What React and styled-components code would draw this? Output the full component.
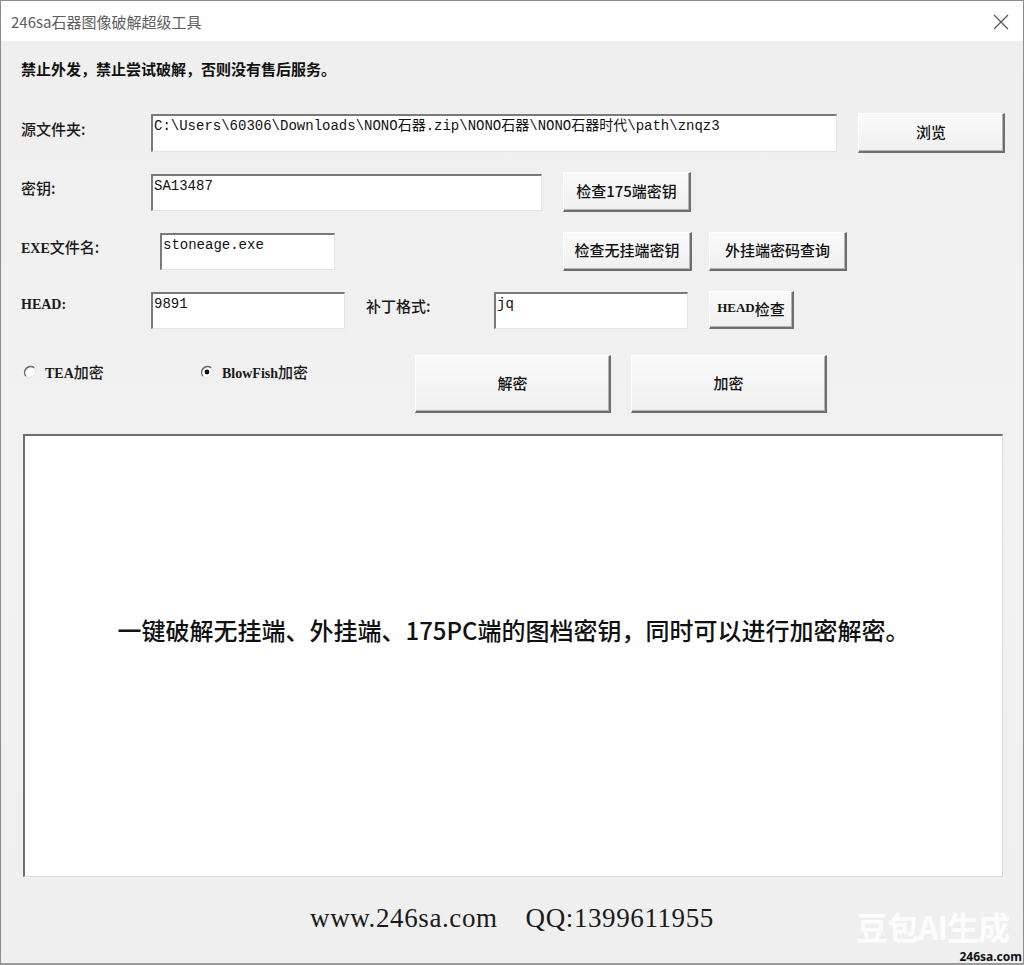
import React from "react";
import styled, { createGlobalStyle } from "styled-components";

const GlobalStyle = createGlobalStyle`
  html, body {
    margin: 0;
    padding: 0;
    background: #ffffff;
  }
  * {
    box-sizing: border-box;
  }
`;

const CJK = `"Noto Sans CJK SC", "Noto Sans", sans-serif`;
const MONO = `"Liberation Mono", "Noto Sans CJK SC", monospace`;
const SERIF = `"Liberation Serif", "Noto Sans CJK SC", serif`;

function CloseIcon() {
  return (
    <svg width="16" height="16" viewBox="0 0 16 16">
      <path d="M1 1 L15 15 M15 1 L1 15" stroke="#555" strokeWidth="1.2" fill="none" />
    </svg>
  );
}

function Radio({ checked }) {
  return (
    <svg width="14" height="14" viewBox="0 0 14 14">
      <circle cx="7" cy="7" r="6" fill="#fff" />
      <path d="M2.8 11.2 A6 6 0 0 1 11.2 2.8" stroke="#6a6a6a" strokeWidth="1.5" fill="none" />
      <path d="M11.2 2.8 A6 6 0 0 1 2.8 11.2" stroke="#e2e2e2" strokeWidth="1.2" fill="none" />
      {checked && <circle cx="7" cy="7" r="2.4" fill="#111" />}
    </svg>
  );
}

export default function App() {
  return (
    <>
      <GlobalStyle />
      <Window>
        <TitleBar>
          <Title>246sa石器图像破解超级工具</Title>
          <Close>
            <CloseIcon />
          </Close>
        </TitleBar>

        <Body>
          <Notice>禁止外发，禁止尝试破解，否则没有售后服务。</Notice>

          <Row top={34} h={40}>
            <Label w={130}>源文件夹:</Label>
            <Field w={686} h={38}>
              C:\Users\60306\Downloads\NONO石器.zip\NONO石器\NONO石器时代\path\znqz3
            </Field>
            <Button w={147} h={40} gap={21}>
              浏览
            </Button>
          </Row>

          <Row top={19} h={40}>
            <Label w={130}>密钥:</Label>
            <Field w={391} h={37}>SA13487</Field>
            <Button w={128} h={40} gap={21}>
              检查175端密钥
            </Button>
          </Row>

          <Row top={20} h={39}>
            <Label w={139} latin>
              EXE<Cjk>文件名:</Cjk>
            </Label>
            <Field w={175} h={37}>stoneage.exe</Field>
            <Button w={129} h={39} gap={228}>
              检查无挂端密钥
            </Button>
            <Button w={138} h={39} gap={17}>
              外挂端密码查询
            </Button>
          </Row>

          <Row top={20} h={38}>
            <Label w={130} latin>
              HEAD:
            </Label>
            <Field w={194} h={37}>9891</Field>
            <Label w={128} gap={21}>
              补丁格式:
            </Label>
            <Field w={194} h={37}>jq</Field>
            <Button w={85} h={38} gap={21} latin>
              HEAD<Cjk>检查</Cjk>
            </Button>
          </Row>

          <OptionRow>
            <RadioGroup>
              <RadioItem w={177}>
                <Radio />
                <RadioText>
                  TEA<Cjk>加密</Cjk>
                </RadioText>
              </RadioItem>
              <RadioItem w={215}>
                <Radio checked />
                <RadioText>
                  BlowFish<Cjk>加密</Cjk>
                </RadioText>
              </RadioItem>
            </RadioGroup>
            <Button w={196} h={58} big>
              解密
            </Button>
            <Button w={196} h={58} gap={20} big>
              加密
            </Button>
          </OptionRow>

          <Output>一键破解无挂端、外挂端、175PC端的图档密钥，同时可以进行加密解密。</Output>

          <Footer>
            <span>www.246sa.com</span>
            <span>QQ:1399611955</span>
          </Footer>
        </Body>

        <Watermark>豆包AI生成</Watermark>
        <SiteMark>246sa.com</SiteMark>
      </Window>
    </>
  );
}

const Window = styled.div`
  position: relative;
  width: 1024px;
  height: 965px;
  border: 1px solid #8c8c8c;
  border-bottom: 2px solid #9a9a9a;
  background: #f0f0f0;
  display: flex;
  flex-direction: column;
  overflow: hidden;
`;

const TitleBar = styled.div`
  height: 40px;
  flex: none;
  background: #ffffff;
  display: flex;
  align-items: center;
  justify-content: space-between;
  padding: 0 14px 0 10px;
`;

const Title = styled.div`
  font-family: ${CJK};
  font-size: 15px;
  color: #5e5e5e;
`;

const Close = styled.div`
  display: flex;
  align-items: center;
  padding-top: 2px;
`;

const Body = styled.div`
  flex: 1;
  display: flex;
  flex-direction: column;
  padding: 0 20px;
  background: linear-gradient(180deg, #efefef 0%, #f1f1f1 50%, #efefef 100%);
`;

const Notice = styled.div`
  margin-top: 18px;
  height: 20px;
  line-height: 20px;
  font-family: ${CJK};
  font-size: 15px;
  font-weight: 700;
  color: #111;
`;

const Row = styled.div`
  display: flex;
  align-items: center;
  margin-top: ${(p) => p.top}px;
  height: ${(p) => p.h}px;
`;

const Label = styled.div`
  flex: none;
  width: ${(p) => p.w}px;
  margin-left: ${(p) => p.gap || 0}px;
  padding-bottom: 10px;
  font-family: ${(p) => (p.latin ? SERIF : CJK)};
  font-weight: ${(p) => (p.latin ? 700 : 500)};
  font-size: ${(p) => (p.latin ? "14px" : "15px")};
  color: #1a1a1a;
`;

const Cjk = styled.span`
  font-family: ${CJK};
  font-weight: 500;
  font-size: 15px;
`;

const Field = styled.div`
  flex: none;
  width: ${(p) => p.w}px;
  height: ${(p) => p.h}px;
  background: #ffffff;
  border-top: 2px solid #7a7a7a;
  border-left: 2px solid #7a7a7a;
  border-right: 1px solid #e4e4e4;
  border-bottom: 1px solid #e4e4e4;
  padding: 1px 1px;
  font-family: ${MONO};
  font-size: 14px;
  line-height: 18px;
  color: #111;
  white-space: nowrap;
  overflow: hidden;
`;

const Button = styled.div`
  flex: none;
  width: ${(p) => p.w}px;
  height: ${(p) => p.h}px;
  margin-left: ${(p) => p.gap || 0}px;
  display: flex;
  align-items: center;
  justify-content: center;
  background: linear-gradient(180deg, #fafafa 0%, #f0f0f0 100%);
  border-top: 1px solid #ffffff;
  border-left: 1px solid #ffffff;
  border-right: 2px solid #6e6e6e;
  border-bottom: 2px solid #6e6e6e;
  box-shadow: inset -1px -1px 0 #b4b4b4;
  font-family: ${(p) => (p.latin ? SERIF : CJK)};
  font-weight: ${(p) => (p.latin ? 700 : 500)};
  font-size: ${(p) => (p.latin ? "13px" : "15px")};
  color: #111;
  padding-bottom: ${(p) => (p.big ? "2px" : "3px")};
`;

const OptionRow = styled.div`
  display: flex;
  align-items: flex-start;
  margin-top: 26px;
  height: 58px;
`;

const RadioGroup = styled.div`
  display: flex;
  padding-top: 6px;
  width: 394px;
  padding-left: 2px;
`;

const RadioItem = styled.div`
  flex: none;
  width: ${(p) => p.w}px;
  display: flex;
  align-items: center;
  gap: 8px;
`;

const RadioText = styled.span`
  font-family: ${SERIF};
  font-weight: 700;
  font-size: 14px;
  color: #1a1a1a;
`;

const Output = styled.div`
  margin-top: 21px;
  margin-left: 2px;
  width: 980px;
  height: 443px;
  flex: none;
  background: #ffffff;
  border-top: 2px solid #6e6e6e;
  border-left: 2px solid #6e6e6e;
  border-right: 1px solid #dcdcdc;
  border-bottom: 1px solid #dcdcdc;
  display: flex;
  align-items: center;
  justify-content: center;
  padding-bottom: 54px;
  font-family: ${CJK};
  font-weight: 500;
  font-size: 24px;
  color: #111;
`;

const Footer = styled.div`
  flex: 1;
  display: flex;
  align-items: center;
  justify-content: center;
  gap: 28px;
  padding-bottom: 4px;
  font-family: "Liberation Serif", serif;
  font-size: 27px;
  letter-spacing: 0.6px;
  color: #1a1a1a;
`;

const Watermark = styled.div`
  position: absolute;
  right: 14px;
  bottom: 14px;
  font-family: ${CJK};
  font-weight: 700;
  font-size: 32px;
  letter-spacing: -1px;
  color: rgba(255, 255, 255, 0.85);
`;

const SiteMark = styled.div`
  position: absolute;
  right: 1px;
  bottom: 0;
  line-height: 12px;
  font-family: "Noto Sans", sans-serif;
  font-weight: 700;
  font-size: 12px;
  color: #111;
`;
